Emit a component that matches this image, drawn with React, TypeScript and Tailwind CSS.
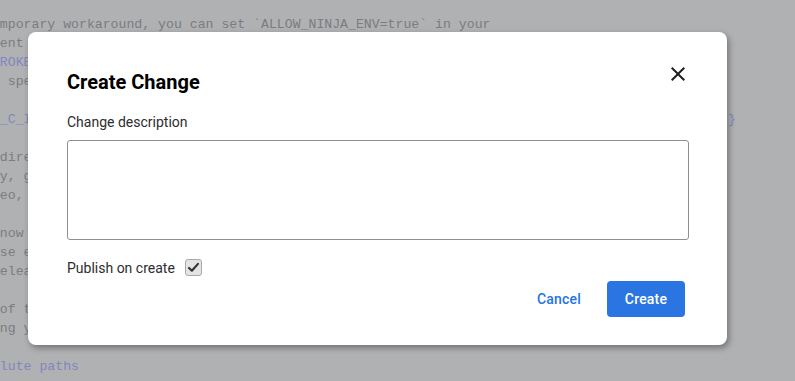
const bgLines: { text: string; code?: boolean; tail?: string }[] = [
  { text: "temporary workaround, you can set `ALLOW_NINJA_ENV=true` in your" },
  { text: "event variables before running the build." },
  { text: "`BROKEN_TOOLCHAIN_FLAGS`", code: true },
  { text: "be specified in the environment." },
  { text: "" },
  { text: "`__C_INCLUDE_DIRS`", code: true, tail: "s}" },
  { text: "" },
  { text: "a directory layout that is expected" },
  { text: "any, guess the paths from the toolchain" },
  { text: "Theo, I think some older setups" },
  { text: "" },
  { text: "- now a known and tested configuration" },
  { text: "case examples as a starting point" },
  { text: "(release notes for details)" },
  { text: "" },
  { text: "s of the generated files" },
  { text: "long your own toolchain" },
  { text: "" },
  { text: "solute paths", code: true },
];

function CloseIcon() {
  return (
    <svg className="w-6 h-6" viewBox="0 0 24 24" fill="#1f1f1f">
      <path d="M19 6.41L17.59 5 12 10.59 6.41 5 5 6.41 10.59 12 5 17.59 6.41 19 12 13.41 17.59 19 19 17.59 13.41 12z" />
    </svg>
  );
}

export default function App() {
  return (
    <div className="relative w-full h-[381px] overflow-hidden bg-[#b0b1b3]">
      {/* dimmed page behind the dialog */}
      <div className="pt-[15px] -ml-[16px] text-[13.2px] leading-[19px] text-[#7b7c7f] font-['Liberation_Mono',monospace] whitespace-pre">
        {bgLines.map((line, i) => (
          <div key={i} className="h-[19px]">
            {line.code ? (
              <span className="text-[#8385bd]">{line.tail ? line.text.padEnd(93) + line.tail : line.text}</span>
            ) : (
              line.text
            )}
          </div>
        ))}
      </div>

      {/* dialog */}
      <div className="absolute left-[28px] top-[32px] w-[699px] bg-white rounded-[8px] shadow-[2px_3px_6px_rgba(0,0,0,0.35)] pl-[39px] pr-[38px] pt-[36px] pb-[28px] font-['Roboto',sans-serif]">
        <div className="flex items-start justify-between">
          <h2 className="text-[20px] leading-[28px] font-bold text-black">Create Change</h2>
          <button className="-mt-[6px] mr-[-1px]">
            <CloseIcon />
          </button>
        </div>
        <div className="mt-4 text-[14px] leading-[20px] text-[#2d2d2d]">Change description</div>
        <textarea className="mt-2 block w-full h-[100px] border border-[#8f8f8f] rounded-[3px] resize-none outline-none" />
        <div className="mt-[18px] flex items-center h-5">
          <span className="text-[14px] leading-[20px] text-[#2d2d2d]">Publish on create</span>
          <span className="ml-[10px] -mt-[2px] w-[17px] h-[17px] rounded-[3px] border border-[#a9a9a9] bg-[#e4e4e4] flex items-center justify-center">
            <svg className="w-[13px] h-[13px]" viewBox="0 0 16 16">
              <path d="M2.5 8.5 L6 12 L13.5 3.5" fill="none" stroke="#333" strokeWidth="2.6" strokeLinecap="round" strokeLinejoin="round" />
            </svg>
          </span>
        </div>
        <div className="mt-[3px] flex justify-end items-center gap-[10px] mr-[4px]">
          <button className="h-9 px-4 text-[14px] font-medium text-[#1f74e6] tracking-[0.2px]">Cancel</button>
          <button className="h-9 w-[78px] rounded-[4px] bg-[#2b75e2] text-white text-[14px] font-medium tracking-[0.2px]">
            Create
          </button>
        </div>
      </div>
    </div>
  );
}
